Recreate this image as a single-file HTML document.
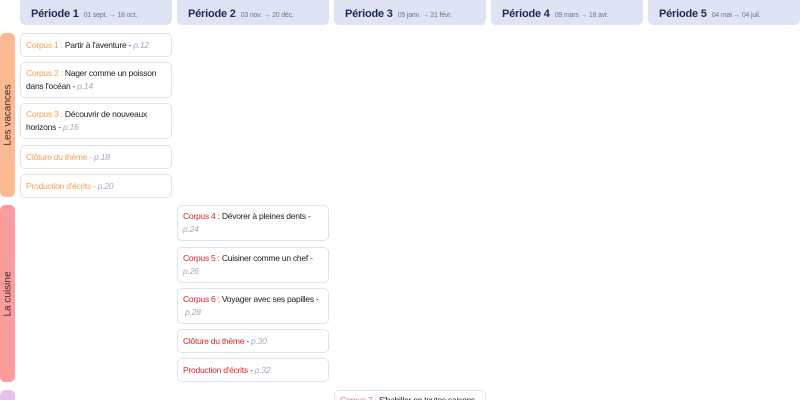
<!DOCTYPE html>
<html><head><meta charset="utf-8"><style>
*{margin:0;padding:0;box-sizing:border-box}
html,body{width:800px;height:400px;overflow:hidden}
body{background:#fff;font-family:"Liberation Sans",sans-serif;position:relative}
.h{position:absolute;top:0;height:25px;width:152px;background:#dfe4f4;border-radius:0 0 5px 5px;padding:0 0 0 11px;line-height:25px;white-space:nowrap;overflow:hidden}
.h b{font-size:11px;color:#1e2a55;letter-spacing:-0.2px}
.h span{font-size:7px;color:#6b7390;margin-left:5px;letter-spacing:-0.2px}
.s{position:absolute;left:0;width:15px;border-radius:5px}
.s span{position:absolute;left:50%;top:50%;transform:translate(-50%,-50%) rotate(-90deg);white-space:nowrap;font-size:10px;color:#3a2a2a}
.c{position:absolute;width:152px;border:1px solid #dfe3ec;border-radius:5px;padding:0 5px;font-size:8.5px;line-height:13px;letter-spacing:-0.25px;color:#222;display:flex;align-items:center;overflow:hidden}
.c div{width:100%}
.p{color:#a3abbd;font-style:italic}
.o{color:#f5a055}.r{color:#d9262e}.k{color:#d76fae}
</style></head><body>
<div class="h" style="left:20px"><b>Période 1</b><span>01 sept. → 18 oct.</span></div>
<div class="h" style="left:177px"><b>Période 2</b><span>03 nov. → 20 déc.</span></div>
<div class="h" style="left:334px"><b>Période 3</b><span>05 janv. → 21 févr.</span></div>
<div class="h" style="left:491px"><b>Période 4</b><span>09 mars → 18 avr.</span></div>
<div class="h" style="left:648px"><b>Période 5</b><span>04 mai → 04 juil.</span></div>

<div class="s" style="top:33px;height:164px;background:#fdb992"><span>Les vacances</span></div>
<div class="s" style="top:205px;height:177px;background:#fd9c9c"><span>La cuisine</span></div>
<div class="s" style="top:390px;height:10px;border-radius:5px 5px 0 0;background:#e8c0ec"></div>

<div class="c" style="left:20px;top:33px;height:24px"><div><span class="o">Corpus 1 :</span> Partir à l'aventure - <span class="p">p.12</span></div></div>
<div class="c" style="left:20px;top:62px;height:36px"><div><span class="o">Corpus 2 :</span> Nager comme un poisson dans l'océan - <span class="p">p.14</span></div></div>
<div class="c" style="left:20px;top:103px;height:36px"><div><span class="o">Corpus 3 :</span> Découvrir de nouveaux horizons - <span class="p">p.16</span></div></div>
<div class="c" style="left:20px;top:145px;height:24px"><div><span class="o">Clôture du thème - </span><span class="p">p.18</span></div></div>
<div class="c" style="left:20px;top:174px;height:24px"><div><span class="o">Production d'écrits - </span><span class="p">p.20</span></div></div>

<div class="c" style="left:177px;top:205px;height:36px"><div><span class="r">Corpus 4 :</span> Dévorer à pleines dents - <span class="p">p.24</span></div></div>
<div class="c" style="left:177px;top:247px;height:36px"><div><span class="r">Corpus 5 :</span> Cuisiner comme un chef - <span class="p">p.26</span></div></div>
<div class="c" style="left:177px;top:288px;height:36px"><div><span class="r">Corpus 6 :</span> Voyager avec ses papilles -&nbsp;<span class="p">p.28</span></div></div>
<div class="c" style="left:177px;top:329px;height:24px"><div><span class="r">Clôture du thème</span> - <span class="p">p.30</span></div></div>
<div class="c" style="left:177px;top:358px;height:24px"><div><span class="r">Production d'écrits</span> - <span class="p">p.32</span></div></div>

<div class="c" style="left:334px;top:390px;height:10px;align-items:flex-start;padding-top:3px;border-bottom:none;border-radius:5px 5px 0 0"><div><span class="k">Corpus 7 :</span> S'habiller en toutes saisons</div></div>
</body></html>
